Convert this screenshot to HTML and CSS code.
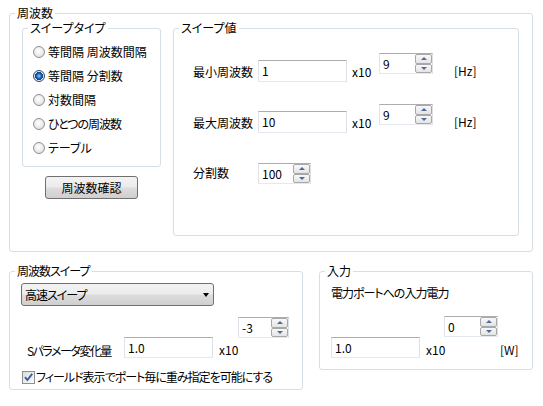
FILE: index.html
```html
<!DOCTYPE html>
<html lang="ja">
<head>
<meta charset="utf-8">
<title>周波数</title>
<link rel="stylesheet" href="styles.css">
</head>
<body>
<div class="page">
  <fieldset class="grp outer">
    <legend>周波数</legend>
    <div class="outer-body">
      <div class="left-col">
        <fieldset class="grp type">
          <legend>スイープタイプ</legend>
          <div class="radio"><span class="rb"></span>等間隔 周波数間隔</div>
          <div class="radio"><span class="rb on"></span>等間隔 分割数</div>
          <div class="radio"><span class="rb"></span>対数間隔</div>
          <div class="radio tight"><span class="rb"></span>ひとつの周波数</div>
          <div class="radio"><span class="rb"></span>テーブル</div>
        </fieldset>
        <div class="btn">周波数確認</div>
      </div>
      <fieldset class="grp values">
        <legend>スイープ値</legend>
        <div class="vrow">
          <span class="lbl">最小周波数</span>
          <div class="tb w89">1</div>
          <span class="x10">x10</span>
          <div class="spin w54"><span class="sv">9</span><div class="sb"><i class="up"></i><i class="dn"></i></div></div>
          <span class="unit">[Hz]</span>
        </div>
        <div class="vrow r2">
          <span class="lbl">最大周波数</span>
          <div class="tb w89">10</div>
          <span class="x10">x10</span>
          <div class="spin w54"><span class="sv">9</span><div class="sb"><i class="up"></i><i class="dn"></i></div></div>
          <span class="unit">[Hz]</span>
        </div>
        <div class="vrow r3">
          <span class="lbl lbl3">分割数</span>
          <div class="spin w53"><span class="sv">100</span><div class="sb"><i class="up"></i><i class="dn"></i></div></div>
        </div>
      </fieldset>
    </div>
  </fieldset>

  <div class="bottom">
    <fieldset class="grp fsweep">
      <legend>周波数スイープ</legend>
      <div class="combo"><span class="ctxt">高速スイープ</span><i class="caret"></i></div>
      <div class="srow">
        <span class="slbl">Sパラメータ変化量</span>
        <div class="tb w89 low">1.0</div>
        <span class="x10 sx">x10</span>
        <div class="spin w51"><span class="sv">-3</span><div class="sb"><i class="up"></i><i class="dn"></i></div></div>
      </div>
      <div class="check">
        <span class="cb"><svg width="11" height="11" viewBox="0 0 11 11"><path d="M2 5.2 L4.4 8 L9.2 1.8" stroke="#3d5b9e" stroke-width="1.9" fill="none"/></svg></span>
        <span class="ctext">フィールド表示でポート毎に重み指定を可能にする</span>
      </div>
    </fieldset>
    <fieldset class="grp input">
      <legend>入力</legend>
      <div class="ilbl">電力ポートへの入力電力</div>
      <div class="irow">
        <div class="tb w89 low2">1.0</div>
        <span class="x10 ix">x10</span>
        <div class="spin w54"><span class="sv">0</span><div class="sb"><i class="up"></i><i class="dn"></i></div></div>
        <span class="unit iu">[W]</span>
      </div>
    </fieldset>
  </div>
</div>
</body>
</html>
```

FILE: styles.css
```css
* { box-sizing: border-box; }
html, body { margin: 0; padding: 0; background: #ffffff; }
body {
  font-family: "Noto Sans CJK JP", "Noto Sans", sans-serif;
  font-size: 12px;
  line-height: 14px;
  color: #000;
  font-feature-settings: "palt";
}
.page { padding: 6px 0 0 9px; }

.grp {
  margin: 0;
  border: 1px solid #d5dfe5;
  border-radius: 3px;
  min-inline-size: 0;
}
.grp > legend { padding: 0 2px; height: 14px; line-height: 14px; }

.outer { width: 524px; padding: 1px 13px 15px 12px; }
.outer > legend { margin-left: -7px; }
.outer-body { display: flex; gap: 12px; align-items: flex-start; }

.left-col { width: 139px; }
.type { width: 139px; padding: 5px 0 6px 10px; }
.type > legend { margin-left: -5px; }
.radio { display: flex; align-items: center; height: 24px; white-space: nowrap; }
.radio.tight { letter-spacing: -1px; }
.rb {
  flex: none;
  width: 12px; height: 12px;
  margin-right: 3px;
  border-radius: 50%;
  border: 1px solid #929292;
  background: radial-gradient(circle at 45% 40%, #ffffff 0%, #f2f2f2 35%, #d4d4d4 100%);
}
.rb.on {
  border-color: #2c4a7a;
  background: radial-gradient(circle at 50% 50%, #8fd8ff 0px, #2a8de0 1.6px, #124a9a 3.2px, #2a3f66 3.9px, #eeeeee 4.3px, #d0d0d0 100%);
}
.btn {
  margin: 9px 0 0 23px;
  width: 93px; height: 23px;
  border: 1px solid #707070;
  border-radius: 3px;
  background: linear-gradient(#f3f3f3 0%, #ebebeb 48%, #dddddd 52%, #cfcfcf 100%);
  display: flex; align-items: center; justify-content: center;
}

.values { width: 346px; padding: 18px 0 51px 19px; }
.values > legend { margin-left: -14px; }
.vrow { display: flex; align-items: flex-start; height: 29px; }
.vrow.r2 { margin-top: 22px; }
.vrow.r3 { margin-top: 30px; height: 21px; }
.lbl { width: 65px; margin-top: 12px; white-space: nowrap; }
.lbl3 { margin-top: 3px; }

.tb {
  height: 22px;
  margin-top: 7px;
  border: 1px solid;
  border-color: #abadb3 #dbdfe6 #e3e9ef #e2e3ea;
  padding-left: 3px;
  display: flex; align-items: center;
  background: #fff;
}
.w89 { width: 89px; }
.x10 { margin-left: 5px; width: 27px; margin-top: 12px; }
.unit { margin-left: 21px; margin-top: 11px; }

.spin {
  height: 21px;
  display: flex; align-items: stretch;
  border: 1px solid;
  border-color: #abadb3 #dbdfe6 #e3e9ef #e2e3ea;
  padding-left: 3px;
  background: #fff;
}
.w54 { width: 54px; }
.w53 { width: 53px; }
.w51 { width: 51px; }
.sv { flex: 1; display: flex; align-items: center; }
.sb { width: 17px; display: flex; flex-direction: column; }
.sb i {
  flex: 1;
  border: 1px solid #a8a8a8;
  border-radius: 2px;
  background: linear-gradient(#f8f8f8, #e4e4e4);
  display: flex; align-items: center; justify-content: center;
}
.sb i::after {
  content: "";
  border-left: 3px solid transparent;
  border-right: 3px solid transparent;
  border-bottom: 3px solid #4d6a9c;
}
.sb i.dn::after { border-bottom: 0; border-top: 3px solid #4d6a9c; }

.bottom { display: flex; align-items: flex-start; margin-top: 12px; }
.fsweep { width: 294px; padding: 5px 0 5px 11px; }
.fsweep > legend { margin-left: -6px; letter-spacing: -1px; }
.combo {
  width: 193px; height: 23px;
  border: 1px solid #707070;
  border-radius: 3px;
  background: linear-gradient(#f3f3f3 0%, #ebebeb 48%, #dddddd 52%, #cfcfcf 100%);
  display: flex; align-items: center; justify-content: space-between;
  padding: 0 4px 0 3px;
}
.ctxt { letter-spacing: -1px; }
.caret {
  border-left: 3.5px solid transparent;
  border-right: 3.5px solid transparent;
  border-top: 4px solid #000;
}
.srow { display: flex; align-items: flex-start; margin-top: 11px; height: 41px; }
.slbl { margin-left: 6px; width: 97px; margin-top: 27px; white-space: nowrap; letter-spacing: -1.5px; }
.tb.low { height: 21px; margin-top: 20px; }
.sx { margin-left: 6px; width: 19px; margin-top: 26px; }
.check { display: flex; align-items: center; margin-top: 12px; height: 14px; }
.cb {
  flex: none;
  width: 13px; height: 13px;
  margin-left: 1px;
  border: 1px solid #8e8f8f;
  background: linear-gradient(135deg, #dcdcdc, #fbfbfb);
  display: flex; align-items: center; justify-content: center;
}
.ctext { margin-left: 1px; white-space: nowrap; letter-spacing: -1px; }

.input { width: 214px; margin-left: 16px; padding: 8px 0 11px 11px; }
.input > legend { margin-left: -6px; }
.ilbl { white-space: nowrap; letter-spacing: -1px; }
.irow { display: flex; align-items: flex-start; margin-top: 16px; height: 42px; }
.tb.low2 { height: 21px; margin-top: 21px; }
.ix { margin-left: 6px; width: 18px; margin-top: 27px; }
.iu { margin-left: 2px; margin-top: 27px; }
```
